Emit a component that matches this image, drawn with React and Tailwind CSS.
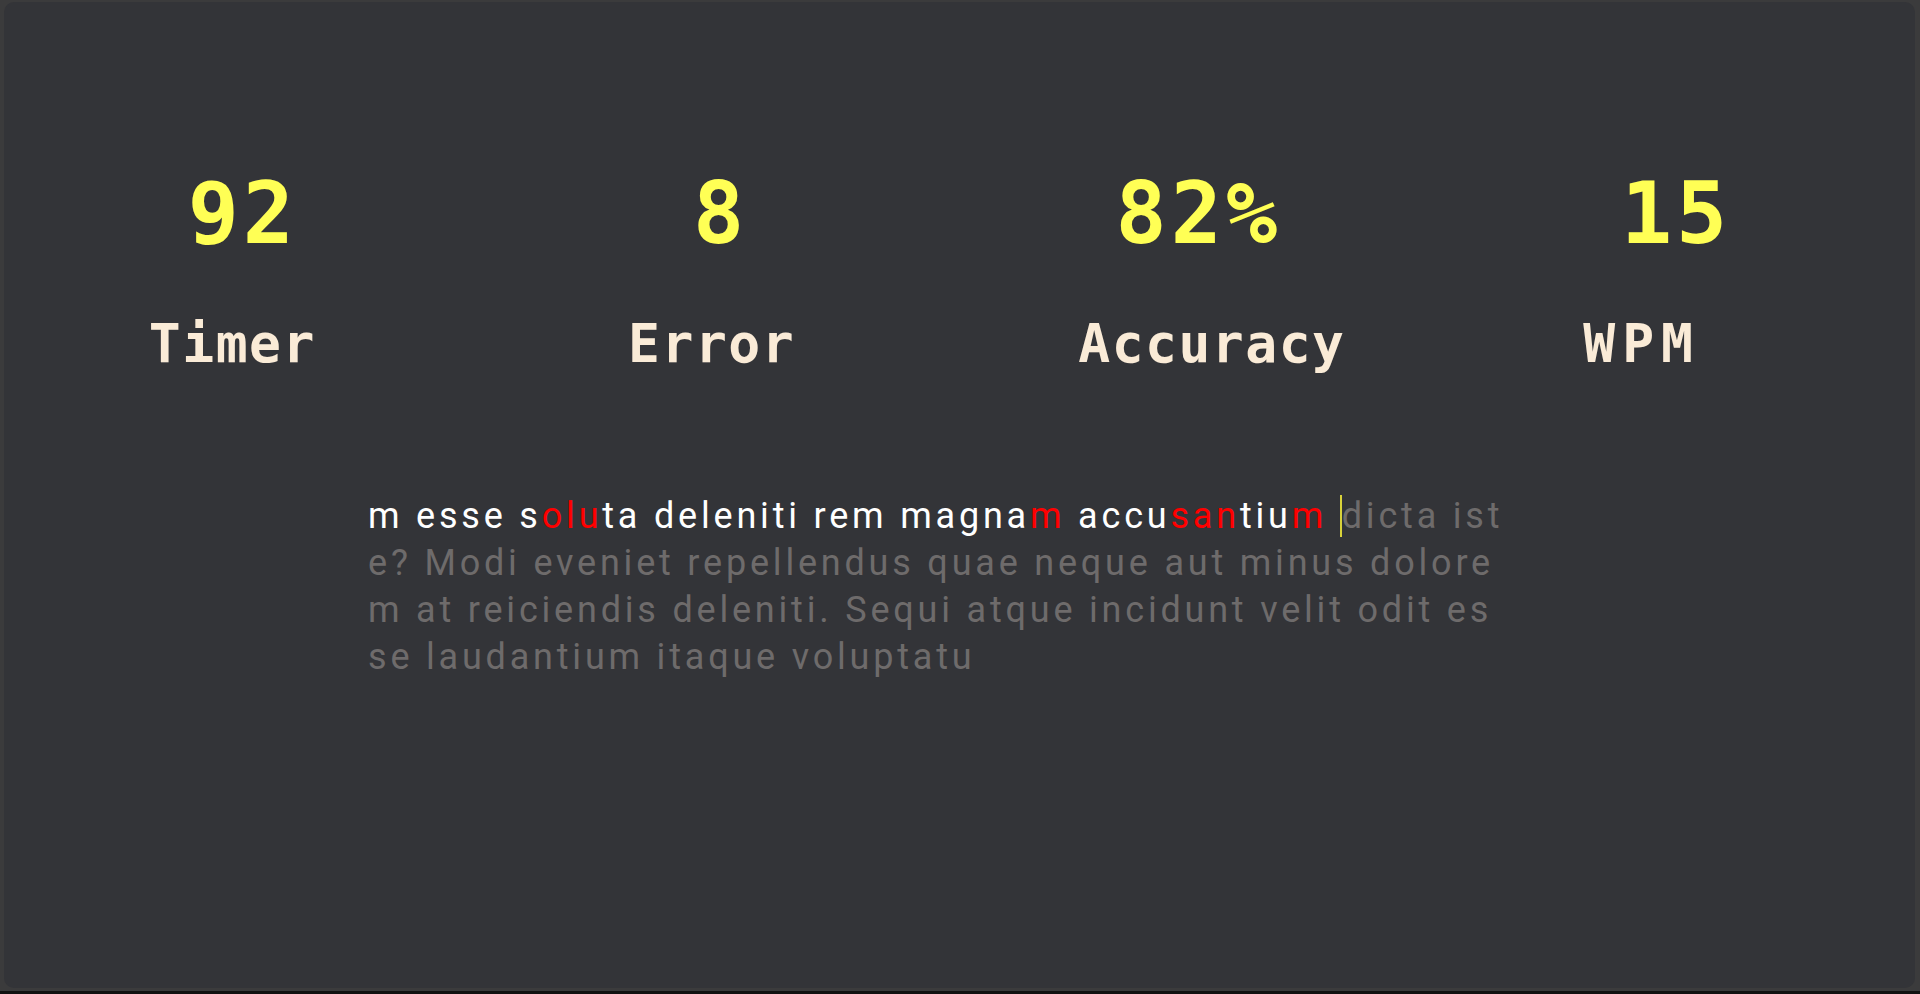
export default function App() {
    const stats = [
        { value: '92', label: 'Timer', labelClass: 'mr-[21px]' },
        { value: '8', label: 'Error', labelClass: 'mr-[18px]' },
        { value: '82%', label: 'Accuracy', labelClass: 'ml-[27px]' },
        { value: '15', label: 'WPM', labelClass: 'mr-[69px] tracking-[7px]' },
    ];

    // typed chars: [text, isError]
    const typed = [
        ['m esse s', false],
        ['olu', true],
        ['ta deleniti rem magna', false],
        ['m', true],
        [' accu', false],
        ['san', true],
        ['tiu', false],
        ['m', true],
        [' ', false],
    ];

    const rest = [
        'e? Modi eveniet repellendus quae neque aut minus dolore',
        'm at reiciendis deleniti. Sequi atque incidunt velit odit es',
        'se laudantium itaque voluptatu',
    ];

    return (
        <div className="flex h-screen flex-col bg-[#3b3b3c]">
            <main className="mt-[2px] mb-[3px] ml-[4px] mr-[5px] flex-1 rounded-[10px] bg-[#333438]">
                <div className="grid grid-cols-4 pt-[169px] font-['DejaVu_Sans_Mono',monospace] font-bold">
                    {stats.map((s) => (
                        <div key={s.label} className="flex flex-col">
                            <p className="text-center text-[85px] leading-none tracking-[4px] text-[#ffff55]">{s.value}</p>
                            <p className={`mt-[61px] text-center text-[53px] leading-none tracking-[1.5px] text-[#faebd7] ${s.labelClass}`}>
                                {s.label}
                            </p>
                        </div>
                    ))}
                </div>

                <div className="ml-[364px] mt-[123px] font-['Roboto',sans-serif] text-[36px] leading-[47px] tracking-[3.8px] whitespace-pre">
                    <div>
                        {typed.map(([t, err], i) => (
                            <span key={i} className={err ? 'text-[#ff0000]' : 'text-white'}>{t}</span>
                        ))}
                        <span className="border-l-2 border-[#d8d23a] text-[#6e6b6b]">dicta ist</span>
                    </div>
                    {rest.map((line) => (
                        <div key={line} className="text-[#6e6b6b]">{line}</div>
                    ))}
                </div>
            </main>
            <div className="h-[3px] bg-[#111111]" />
        </div>
    );
}
